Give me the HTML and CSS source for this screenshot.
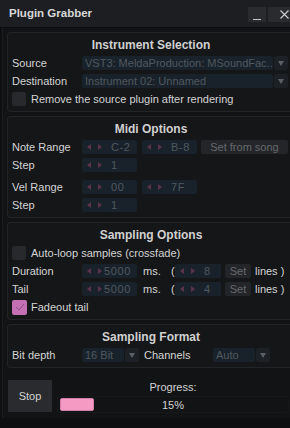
FILE: index.html
```html
<!DOCTYPE html>
<html lang="en">
	<head>
		<meta charset="utf-8">
		<title>Plugin Grabber</title>
		<link rel="stylesheet" href="styles.css">
	</head>
	<body>
		<div class="window">
			<div class="titlebar">
				<span class="title">Plugin Grabber</span>
				<div class="winbtns">
					<div class="winbtn min"><svg width="8" height="8" viewBox="0 0 8 8"><path d="M0 7.5H8" stroke="#c8c8c8" stroke-width="1"/></svg></div>
					<div class="winbtn close"><svg width="9" height="9" viewBox="0 0 9 9"><path d="M0.5 0.5L8.5 8.5M8.5 0.5L0.5 8.5" stroke="#c8c8c8" stroke-width="1.2"/></svg></div>
				</div>
			</div>

			<div class="frame">
				<!-- instrument -->
				<div class="panel">
					<div class="ptitle">Instrument Selection</div>
					<div class="row">
						<span class="label">Source</span>
						<div class="popup w-src"><span class="ptext">VST3: MeldaProduction: MSoundFac..</span></div>
						<div class="parrow"></div>
					</div>
					<div class="row">
						<span class="label">Destination</span>
						<div class="popup w-src"><span class="ptext">Instrument 02: Unnamed</span></div>
						<div class="parrow"></div>
					</div>
					<div class="row">
						<span class="check"></span>
						<span class="clabel">Remove the source plugin after rendering</span>
					</div>
				</div>

				<!-- midi -->
				<div class="panel">
					<div class="ptitle">Midi Options</div>
					<div class="row">
						<span class="label">Note Range</span>
						<div class="vbox"><span class="arrows"></span><span class="vtext">C-2</span></div>
						<div class="vbox gap5"><span class="arrows"></span><span class="vtext">B-8</span></div>
						<div class="btn w-song">Set from song</div>
					</div>
					<div class="row">
						<span class="label">Step</span>
						<div class="vbox"><span class="arrows"></span><span class="vtext">1</span></div>
					</div>
					<div class="row sep">
						<span class="label">Vel Range</span>
						<div class="vbox"><span class="arrows"></span><span class="vtext">00</span></div>
						<div class="vbox gap5"><span class="arrows"></span><span class="vtext">7F</span></div>
					</div>
					<div class="row">
						<span class="label">Step</span>
						<div class="vbox"><span class="arrows"></span><span class="vtext">1</span></div>
					</div>
				</div>

				<!-- sampling -->
				<div class="panel">
					<div class="ptitle">Sampling Options</div>
					<div class="row">
						<span class="check"></span>
						<span class="clabel">Auto-loop samples (crossfade)</span>
					</div>
					<div class="row">
						<span class="label">Duration</span>
						<div class="vbox"><span class="arrows"></span><span class="vtext long">5000</span></div>
						<span class="unit">ms.</span>
						<span class="paren">(</span>
						<div class="vbox small"><span class="arrows"></span><span class="vtext">8</span></div>
						<div class="btn w-set">Set</div>
						<span class="lines">lines )</span>
					</div>
					<div class="row">
						<span class="label">Tail</span>
						<div class="vbox"><span class="arrows"></span><span class="vtext long">5000</span></div>
						<span class="unit">ms.</span>
						<span class="paren">(</span>
						<div class="vbox small"><span class="arrows"></span><span class="vtext">4</span></div>
						<div class="btn w-set">Set</div>
						<span class="lines">lines )</span>
					</div>
					<div class="row">
						<span class="check on"><svg width="10" height="8" viewBox="0 0 10 8"><path d="M1 4L4 7L9 1" fill="none" stroke="#8e4f83" stroke-width="1"/></svg></span>
						<span class="clabel">Fadeout tail</span>
					</div>
				</div>

				<!-- format -->
				<div class="panel">
					<div class="ptitle">Sampling Format</div>
					<div class="row">
						<span class="label">Bit depth</span>
						<div class="popup w-bit"><span class="ptext">16 Bit</span></div>
						<div class="parrow"></div>
						<span class="label2">Channels</span>
						<div class="popup w-bit"><span class="ptext">Auto</span></div>
						<div class="parrow"></div>
					</div>
				</div>

				<div class="footer">
					<div class="stop">Stop</div>
					<div class="progress">
						<div class="plabel">Progress:</div>
						<div class="track">
							<div class="bar" style="width:15%"></div>
							<span class="pct">15%</span>
						</div>
					</div>
				</div>
			</div>
		</div>
	</body>
</html>
```

FILE: styles.css
```css
body {
	margin: 0;
	background-color: #0e0f10;
	font-family: "Liberation Sans", Arial, sans-serif;
	font-size: 11px;
	color: #d4d4d4;
	overflow: hidden;
}

.window {
	width: 300px;
	height: 428px;
	overflow: hidden;
}

.titlebar {
	height: 27px;
	border-bottom: 1px solid #0c0d0e;
	background-color: #1c1e21;
	display: flex;
	align-items: center;
}

.title {
	padding-left: 9px;
	font-weight: bold;
	font-size: 11.5px;
	color: #d8d8d8;
	flex: 1;
	margin-top: -1px;
}

.winbtns {
	display: flex;
	gap: 2px;
	align-self: flex-start;
	margin-top: 7px;
}

.winbtn {
	height: 15px;
	background-color: #292b2e;
	display: flex;
	align-items: center;
	justify-content: center;
}

.winbtn.min {
	width: 18px;
}

.winbtn.min svg {
	margin-top: 3px;
}

.winbtn.close {
	width: 32px;
}

.frame {
	margin-left: 2px;
	border-left: 1px solid #1d1e20;
	background-color: #121315;
	padding: 4px 0 0 4px;
	height: 386px;
}

.panel {
	border: 1px solid #222427;
	border-right: none;
	border-radius: 4px 0 0 4px;
	background-color: #151618;
	padding: 5px 0 5px 4px;
	margin-bottom: 4px;
}

.ptitle {
	height: 15px;
	line-height: 15px;
	text-align: center;
	font-weight: bold;
	font-size: 12px;
	color: #d0d0d0;
	margin-bottom: 3px;
	padding-right: 10px;
}

.row {
	display: flex;
	align-items: center;
	height: 14px;
	margin-top: 4px;
	white-space: nowrap;
}

.ptitle + .row {
	margin-top: 0;
}

.row.sep {
	margin-top: 8px;
}

.label {
	width: 70px;
}

.label2 {
	width: 69px;
	margin-left: 5px;
}

.popup {
	height: 14px;
	background-color: #19222a;
	border-radius: 2px;
	line-height: 14px;
	color: #4f5860;
	overflow: hidden;
}

.ptext {
	padding-left: 3px;
}

.w-src {
	width: 191px;
}

.w-bit {
	width: 42px;
}

.parrow {
	width: 14px;
	height: 14px;
	margin-left: 1px;
	background-color: #1d2024;
	border-radius: 2px;
	display: flex;
	align-items: center;
	justify-content: center;
}

.parrow::before {
	content: "";
	border-top: 5px solid #5b6066;
	border-left: 3.5px solid transparent;
	border-right: 3.5px solid transparent;
}

.check {
	width: 14px;
	height: 14px;
	background-color: #27292c;
	border-radius: 2px;
	margin-right: 5px;
	display: flex;
	align-items: center;
	justify-content: center;
}

.check.on {
	background-color: #c370b4;
	height: 15px;
	width: 15px;
	margin-right: 4px;
}

.clabel {
	color: #d4d4d4;
}

.vbox {
	width: 55px;
	height: 14px;
	background-color: #19222a;
	border-radius: 2px;
	display: flex;
	align-items: center;
}

.vbox.gap5 {
	margin-left: 5px;
}

.vbox.small {
	width: 46px;
}

.arrows {
	width: 17px;
	padding-left: 5px;
	display: flex;
	align-items: center;
}

.arrows::before {
	content: "";
	border-right: 4px solid #5a3349;
	border-top: 3.5px solid transparent;
	border-bottom: 3.5px solid transparent;
}

.arrows::after {
	content: "";
	margin-left: 7px;
	border-left: 4px solid #5a3349;
	border-top: 3.5px solid transparent;
	border-bottom: 3.5px solid transparent;
}

.vtext {
	color: #4f5860;
	padding-left: 7px;
	letter-spacing: 0.6px;
}

.vtext.long {
	padding-left: 0;
}

.btn {
	height: 14px;
	line-height: 14px;
	background-color: #242528;
	border-radius: 2px;
	color: #66696d;
	text-align: center;
}

.w-song {
	width: 87px;
	margin-left: 4px;
}

.w-set {
	width: 26px;
	margin-left: 4px;
}

.unit {
	margin-left: 6px;
	width: 28px;
}

.paren {
	width: 4px;
}

.lines {
	margin-left: 4px;
}

.footer {
	display: flex;
	margin-top: 12px;
	padding-left: 1px;
}

.stop {
	width: 44px;
	height: 32px;
	line-height: 32px;
	text-align: center;
	background-color: #2a2b2e;
	color: #d4d4d4;
	border-radius: 1px;
}

.progress {
	margin-left: 5px;
	width: 232px;
}

.plabel {
	text-align: center;
	height: 14px;
	line-height: 14px;
}

.track {
	position: relative;
	margin-top: 2px;
	height: 17px;
	border: 1px solid #17181a;
	border-radius: 3px;
	padding: 1px 2px;
	box-sizing: border-box;
}

.bar {
	height: 13px;
	background-color: #f59ac3;
	border: 1px solid #d47fa7;
	border-radius: 2px;
	box-sizing: border-box;
}

.pct {
	position: absolute;
	left: 0;
	right: 0;
	top: 1px;
	text-align: center;
	line-height: 14px;
}
```
